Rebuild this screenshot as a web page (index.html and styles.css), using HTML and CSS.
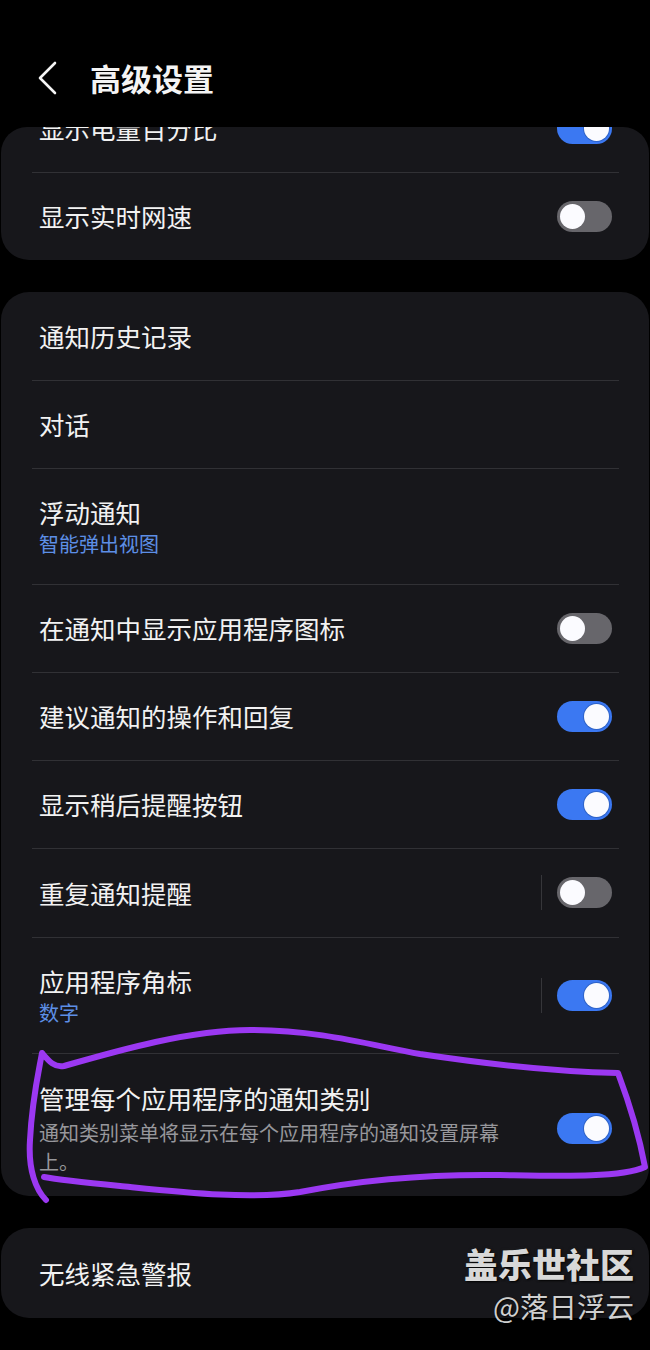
FILE: index.html
```html
<!DOCTYPE html>
<html lang="zh-CN">
<head>
<meta charset="utf-8">
<title>高级设置</title>
<link rel="stylesheet" href="styles.css">
</head>
<body>
<div class="screen">
  <header class="topbar">
    <svg class="back" width="22" height="34" viewBox="0 0 22 34"><polyline points="18,2 3,17 18,32" fill="none" stroke="#f4f4f4" stroke-width="2.6" stroke-linecap="round" stroke-linejoin="round"/></svg>
    <h1 class="title">高级设置</h1>
  </header>
  <main class="viewport">
    <section class="card card-first">
      <div class="row"><div class="text"><div class="label">显示电量百分比</div></div><span class="toggle on"><span class="knob"></span></span></div>
      <div class="row"><div class="text"><div class="label">显示实时网速</div></div><span class="toggle"><span class="knob"></span></span></div>
    </section>
    <section class="card">
      <div class="row"><div class="text"><div class="label">通知历史记录</div></div></div>
      <div class="row"><div class="text"><div class="label">对话</div></div></div>
      <div class="row"><div class="text"><div class="label">浮动通知</div><div class="sub blue">智能弹出视图</div></div></div>
      <div class="row"><div class="text"><div class="label">在通知中显示应用程序图标</div></div><span class="toggle"><span class="knob"></span></span></div>
      <div class="row"><div class="text"><div class="label">建议通知的操作和回复</div></div><span class="toggle on"><span class="knob"></span></span></div>
      <div class="row"><div class="text"><div class="label">显示稍后提醒按钮</div></div><span class="toggle on"><span class="knob"></span></span></div>
      <div class="row"><div class="text"><div class="label">重复通知提醒</div></div><span class="vsep"></span><span class="toggle"><span class="knob"></span></span></div>
      <div class="row"><div class="text"><div class="label">应用程序角标</div><div class="sub blue">数字</div></div><span class="vsep"></span><span class="toggle on"><span class="knob"></span></span></div>
      <div class="row row-last"><div class="text"><div class="label">管理每个应用程序的通知类别</div><div class="desc">通知类别菜单将显示在每个应用程序的通知设置屏幕上。</div></div><span class="toggle on"><span class="knob"></span></span></div>
    </section>
    <section class="card">
      <div class="row row-single"><div class="text"><div class="label">无线紧急警报</div></div></div>
    </section>
  </main>
  <div class="watermark">
    <div class="wm-brand">盖乐世社区</div>
    <div class="wm-user">@落日浮云</div>
  </div>
  <svg class="scribble" width="650" height="1350" viewBox="0 0 650 1350">
    <path d="M46,1200 C36,1190 28,1170 30,1140 C32,1100 38,1075 42,1053 C48,1060 54,1068 64,1066 C120,1050 190,1030 250,1030 C320,1030 370,1045 420,1054 C500,1066 570,1072 618,1073 C630,1105 640,1140 645,1167 C620,1178 560,1176 500,1175 C430,1174 360,1180 300,1192 C250,1200 180,1192 120,1186 C90,1183 60,1180 44,1177" fill="none" stroke="#9b38f2" stroke-width="6" stroke-linecap="round" stroke-linejoin="round"/>
  </svg>
</div>
</body>
</html>
```
FILE: styles.css
```css
* { box-sizing: border-box; }
html, body { margin: 0; padding: 0; background: #000; }
body {
  font-family: "Noto Sans CJK SC", "Noto Sans", sans-serif;
  color: #f2f2f2;
}
.screen {
  position: relative;
  width: 650px;
  height: 1350px;
  overflow: hidden;
  background: #000;
}
.topbar {
  height: 127px;
  display: flex;
  align-items: center;
  padding: 30px 0 0 37px;
}
.back { display: block; margin-top: -2px; }
.title {
  margin: -2px 0 0 31px;
  font-size: 31px;
  font-weight: 700;
  line-height: 40px;
  color: #f4f4f4;
}
.viewport {
  overflow: hidden;
  border-radius: 26px 26px 0 0;
  display: flex;
  flex-direction: column;
  gap: 32px;
  margin: 0 1px;
}
.card {
  background: #17171b;
  border-radius: 28px;
}
.card-first { margin-top: -43px; }
.row {
  display: flex;
  align-items: center;
  min-height: 88px;
  padding: 27px 37px 27px 38px;
  position: relative;
}
.row + .row::before {
  content: "";
  position: absolute;
  left: 31px;
  right: 30px;
  top: 0;
  height: 1px;
  background: #313135;
}
.row-last { padding-top: 28px; padding-bottom: 20px; }
.row-single { min-height: 90px; }
.text { flex: 1; min-width: 0; }
.label {
  font-size: 25.5px;
  line-height: 34px;
  color: #f2f2f2;
}
.sub {
  font-size: 20px;
  line-height: 26px;
  margin-top: 2px;
}
.blue { color: #5d8fe6; }
.desc {
  font-size: 20px;
  line-height: 29px;
  margin-top: 3px;
  color: #97979c;
  max-width: 470px;
}
.vsep {
  width: 1px;
  height: 35px;
  background: #36363a;
  margin-right: 15px;
}
.toggle {
  flex: none;
  width: 55px;
  height: 31px;
  border-radius: 16px;
  background: #67666b;
  position: relative;
}
.toggle .knob {
  position: absolute;
  top: 3px;
  left: 3px;
  width: 25px;
  height: 25px;
  border-radius: 50%;
  background: #fbfbff;
}
.toggle.on { background: #3b78f2; }
.toggle.on .knob {
  left: auto;
  right: 3px;
  box-shadow: 0 0 0 1px #2f63c8;
}
.watermark {
  position: absolute;
  right: 16px;
  top: 1243px;
  text-align: right;
}
.wm-brand {
  font-size: 34px;
  font-weight: 900;
  line-height: 42px;
  color: #d8d8d8;
  text-shadow: 1px 1px 2px #000, 0 0 3px #222;
}
.wm-user {
  font-size: 28.5px;
  line-height: 42px;
  color: #cfcfcf;
  text-shadow: 1px 1px 2px #000;
}
.scribble {
  position: absolute;
  left: 0;
  top: 0;
  pointer-events: none;
}
```
